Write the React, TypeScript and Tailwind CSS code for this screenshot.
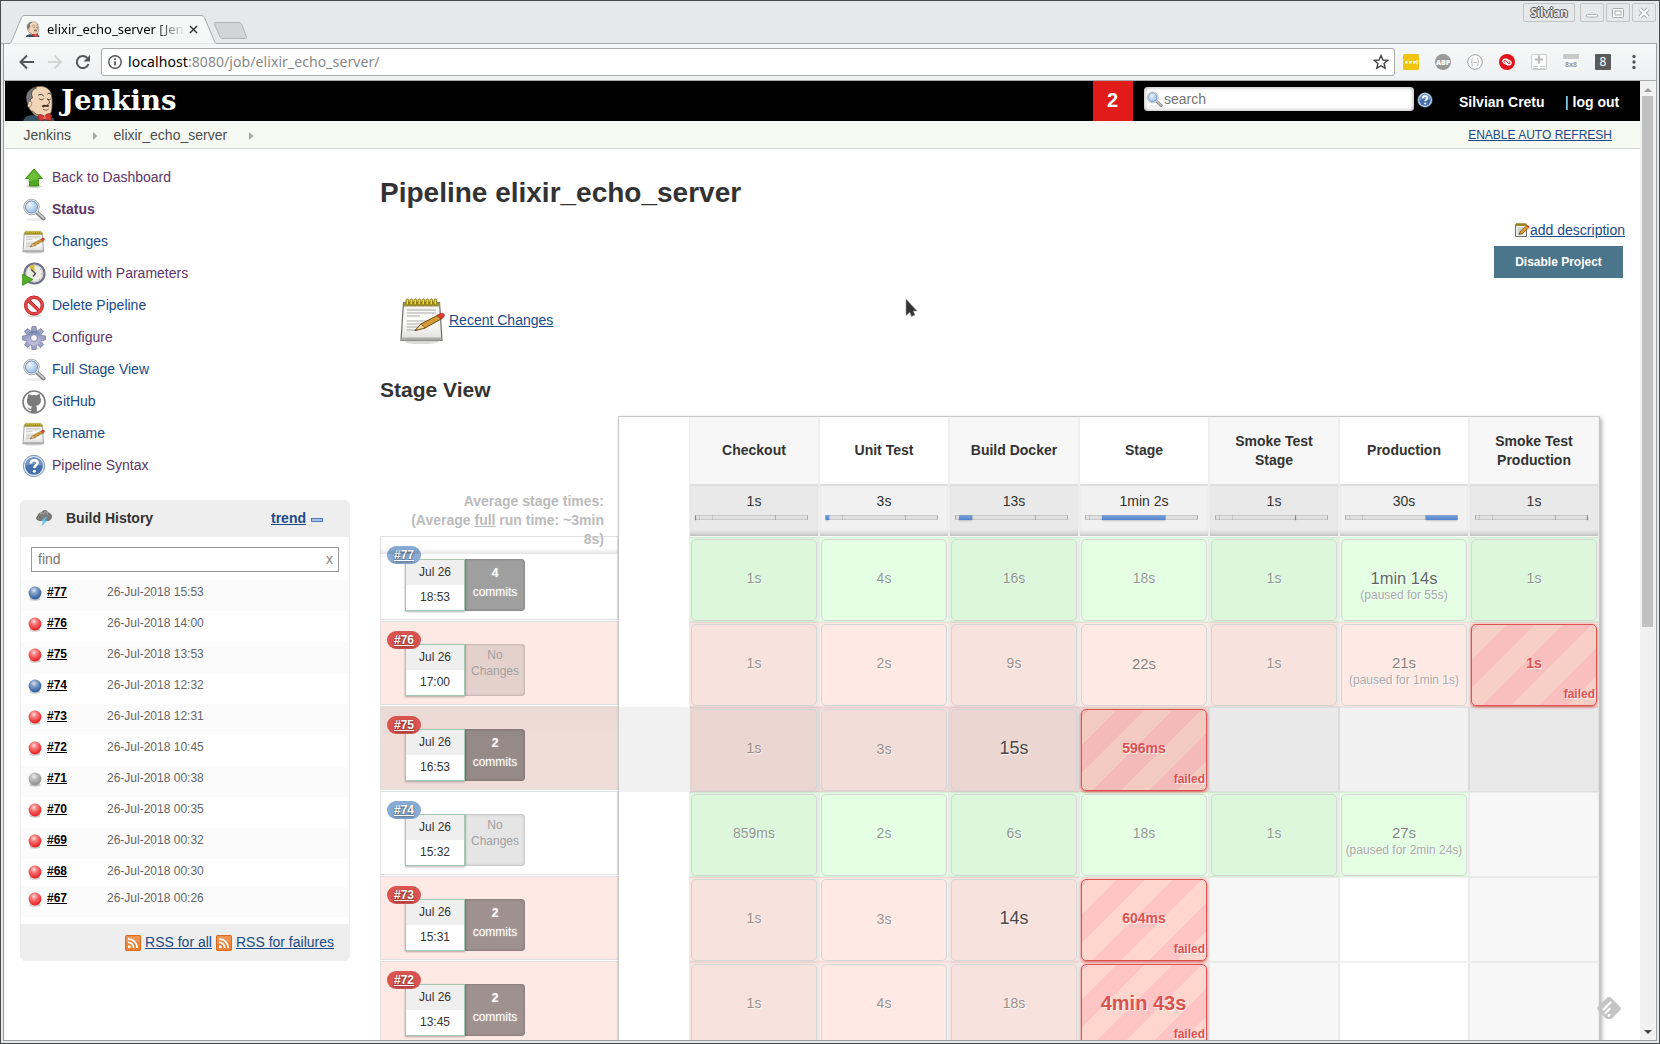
import React from "react";

type Kind = "ok" | "bad" | "failed" | "none";
type Cell = { kind: Kind; text?: string; size?: string; tone?: string; paused?: string };
type Run = {
  id: string;
  ok: boolean;
  time: string;
  commits: number;
  hovered?: boolean;
  cells: Cell[];
};

const s14 = "text-[14px]";

const c = (kind: Kind, text?: string, size = s14, tone = "text-[#333]/50", paused?: string): Cell => ({
  kind, text, size, tone, paused,
});

const runs: Run[] = [
  { id: "#77", ok: true, time: "18:53", commits: 4, cells: [
    c("ok", "1s"), c("ok", "4s"), c("ok", "16s"), c("ok", "18s"), c("ok", "1s"),
    c("ok", "1min 14s", "text-[16.5px]", "text-[#333]/75", "(paused for 55s)"), c("ok", "1s")] },
  { id: "#76", ok: false, time: "17:00", commits: 0, cells: [
    c("bad", "1s"), c("bad", "2s"), c("bad", "9s"), c("bad", "22s", "text-[15px] pt-px", "text-[#333]/60"), c("bad", "1s"),
    c("bad", "21s", "text-[15px]", "text-[#333]/60", "(paused for 1min 1s)"), c("failed", "1s")] },
  { id: "#75", ok: false, time: "16:53", commits: 2, hovered: true, cells: [
    c("bad", "1s"), c("bad", "3s", "text-[14.3px] pt-px"), c("bad", "15s", "text-[18px]", "text-[#333]/90"), c("failed", "596ms"),
    c("none"), c("none"), c("none")] },
  { id: "#74", ok: true, time: "15:32", commits: 0, cells: [
    c("ok", "859ms"), c("ok", "2s"), c("ok", "6s"), c("ok", "18s"), c("ok", "1s"),
    c("ok", "27s", "text-[15px]", "text-[#333]/60", "(paused for 2min 24s)"), c("none")] },
  { id: "#73", ok: false, time: "15:31", commits: 2, cells: [
    c("bad", "1s"), c("bad", "3s", "text-[14.3px] pt-px"), c("bad", "14s", "text-[18px]", "text-[#333]/90"), c("failed", "604ms"),
    c("none"), c("none"), c("none")] },
  { id: "#72", ok: false, time: "13:45", commits: 2, cells: [
    c("bad", "1s"), c("bad", "4s"), c("bad", "18s"), c("failed", "4min 43s", "text-[20px] mr-px"),
    c("none"), c("none"), c("none")] },
];

const stages = [
  { name: "Checkout", avg: "1s", from: 0, to: 1 },
  { name: "Unit Test", avg: "3s", from: 1, to: 4 },
  { name: "Build Docker", avg: "13s", from: 4, to: 17 },
  { name: "Stage", avg: "1min 2s", from: 17, to: 80 },
  { name: "Smoke Test Stage", avg: "1s", from: 80, to: 81 },
  { name: "Production", avg: "30s", from: 81, to: 112 },
  { name: "Smoke Test Production", avg: "1s", from: 112, to: 113 },
];

const history: [string, string, "blue" | "red" | "grey"][] = [
  ["#77", "26-Jul-2018 15:53", "blue"],
  ["#76", "26-Jul-2018 14:00", "red"],
  ["#75", "26-Jul-2018 13:53", "red"],
  ["#74", "26-Jul-2018 12:32", "blue"],
  ["#73", "26-Jul-2018 12:31", "red"],
  ["#72", "26-Jul-2018 10:45", "red"],
  ["#71", "26-Jul-2018 00:38", "grey"],
  ["#70", "26-Jul-2018 00:35", "red"],
  ["#69", "26-Jul-2018 00:32", "red"],
  ["#68", "26-Jul-2018 00:30", "red"],
  ["#67", "26-Jul-2018 00:26", "red"],
];

/* ---------- icons ---------- */

function Butler({ className }: { className: string }) {
  return (
    <svg viewBox="0 0 32 36" className={className}>
      <path d="M0 36c0-3 3-5 8-6l12 1c6 0 11 1 11 5z" fill="#335061" />
      <path d="M5 20C3 14 5 6 10 3c6-3 14-2 17 4 2 4 2 14 1 19-1 4-5 6-9 6-6 0-9-2-11-6-2-1-3-4-3-6z" fill="#f0d6b7" stroke="#5b5048" strokeWidth=".8" />
      <path d="M4 19C1 12 3 6 9 3c2-1 3-1 4 0-3 1-5 3-5 6l1 4-2 1-1 5z" fill="#7c7a7c" stroke="#222" strokeWidth=".6" />
      <path d="M5 17c2-2 4 0 3 3s-3 3-4 1z" fill="#f0d6b7" stroke="#6b5a4a" strokeWidth=".6" />
      <path d="M15 10c2-1 4-1 5 1M24 9c1-1 2-1 3 0M16 14c1 1 3 1 4 0M24 14c1 1 2 1 3 0M24 14c2 2 3 4 1 5M9 26c2 3 5 4 9 5" fill="none" stroke="#3b2b20" strokeWidth=".9" strokeLinecap="round" />
      <path d="M18 21c2-2 4-1 5-1 1-1 2 0 3 1-2 2-4 0-5 1s-2 0-3-1z" fill="#4a382b" />
      <path d="M20 24.500c2 1 4 1 5-.5" fill="none" stroke="#7a4a35" strokeWidth=".9" strokeLinecap="round" />
      <path d="M19 29l3 6h5l1-5-4 1z" fill="#fff" />
      <path d="M15 30c2-1 4 0 6 1 2-2 4-3 6-2 1 3 1 5 0 7-2 0-4-1-6-2-2 2-4 2-5 2-1-2-2-4-1-6z" fill="#d33833" stroke="#7a1513" strokeWidth=".6" />
      <circle cx="21" cy="32.500" r="1.500" fill="#ef6b60" />
    </svg>
  );
}

function Magnifier({ className }: { className: string }) {
  return (
    <svg viewBox="0 0 24 24" className={className}>
      <defs>
        <radialGradient id="lens" cx=".35" cy=".3" r=".8">
          <stop offset="0" stopColor="#eef5fd" />
          <stop offset="1" stopColor="#93b9e6" />
        </radialGradient>
      </defs>
      <ellipse cx="13" cy="21.500" rx="9" ry="1.500" fill="#000" opacity=".08" />
      <path d="M14.500 14l7 6.500" stroke="#7b7d7a" strokeWidth="4" strokeLinecap="round" />
      <path d="M15 14l6.500 6" stroke="#c4c6c2" strokeWidth="2" strokeLinecap="round" />
      <circle cx="9.500" cy="9" r="7.800" fill="#e7e8e6" stroke="#a5a7a4" strokeWidth=".9" />
      <circle cx="9.500" cy="9" r="6" fill="url(#lens)" stroke="#6f93c1" strokeWidth="1" />
    </svg>
  );
}

function Notepad({ className }: { className: string }) {
  return (
    <svg viewBox="0 0 48 48" className={className}>
      <defs>
        <linearGradient id="paper" x1="0" y1="0" x2="0" y2="1">
          <stop offset="0" stopColor="#f2f2f1" />
          <stop offset=".5" stopColor="#fdfdfd" />
          <stop offset="1" stopColor="#dededd" />
        </linearGradient>
      </defs>
      <ellipse cx="23" cy="45" rx="17" ry="2" fill="#000" opacity=".15" />
      <path d="M4.500 5.500h36l2.500 38H2z" fill="url(#paper)" stroke="#6c6d6a" strokeWidth="1.200" />
      <path d="M2.800 40.500h39.600v3H2.400z" fill="#a9aba8" />
      <path d="M5 5.500h35.500l.4 4H4.800z" fill="#a39443" />
      {[7, 11, 15, 19, 23, 27, 31, 35].map((x) => (
        <rect key={x} x={x} y="2" width="2.600" height="6" rx="1.300" fill="#f0d93a" stroke="#7d6c0c" strokeWidth=".9" />
      ))}
      <path d="M8 13h29M8 16h29M8 19h13M8 24h22M8 27h18M8 30h15M8 33h10" stroke="#a8aaa7" strokeWidth="1" />
      <path d="M16 33.500l6-6.500 17-9 4 3.500-17 9.500z" fill="#d59a35" stroke="#6e4a0d" strokeWidth="1" />
      <path d="M16 33.500l6-6.500 4 4z" fill="#f0d5a0" stroke="#6e4a0d" strokeWidth=".8" />
      <path d="M38 18.500l4 3.500c5-2 4-7-.5-5.500z" fill="#e23a2c" stroke="#8c1d14" strokeWidth=".6" />
    </svg>
  );
}

function EditNote() {
  return (
    <svg viewBox="0 0 16 16" className="h-4 w-4">
      <path d="M1.500 2.500h11v12h-11z" fill="#f4f4f3" stroke="#6c6d6a" />
      <path d="M2 1.500h10.500v2.500H2z" fill="#b39b2c" />
      <path d="M3 1v2.500M5 1v2.500M7 1v2.500M9 1v2.500M11 1v2.500" stroke="#6d5d10" strokeWidth=".8" />
      <path d="M3.500 6h7M3.500 8h4M3.500 10h2.500M3.500 12h6" stroke="#a5a7a4" strokeWidth=".8" />
      <path d="M5 12.500l1.500-3.500 6.500-5.500 2 2-6.500 6z" fill="#dfa13a" stroke="#6e4a0d" strokeWidth=".8" />
      <path d="M12.500 4l2 2 1-1.200-1.700-1.800z" fill="#e23a2c" />
    </svg>
  );
}

function Help({ className }: { className: string }) {
  return (
    <svg viewBox="0 0 24 24" className={className}>
      <circle cx="12" cy="12" r="10.700" fill="#dbe4f0" stroke="#7d97bd" strokeWidth="1" />
      <circle cx="12" cy="12" r="8.800" fill="#4470ad" />
      <path d="M3.200 12a8.800 8.800 0 0117.600 0c-5-2-12.600-2-17.600 0z" fill="#7396c8" />
      <path d="M8.800 9.500c0-4.500 6.700-4 6.700-.5 0 2.300-3.200 2.300-3.200 5" fill="none" stroke="#fff" strokeWidth="2.600" />
      <circle cx="12.300" cy="17.300" r="1.500" fill="#fff" />
    </svg>
  );
}

const iconCls = "h-6 w-6";

function UpArrow() {
  return (
    <svg viewBox="0 0 24 24" className={iconCls}>
      <ellipse cx="12" cy="20.500" rx="8" ry="1.500" fill="#000" opacity=".18" />
      <path d="M12 3l8.500 9.500h-4V20h-9v-7.500h-4z" fill="#4fa81f" stroke="#3a8a10" strokeWidth=".9" />
      <path d="M12 4.500l6.500 7.300h-3V14c-3-1-6 0-9 2v-4.200h-1z" fill="#7ed04b" opacity=".6" />
    </svg>
  );
}

function ClockPlay() {
  return (
    <svg viewBox="0 0 24 24" className={iconCls}>
      <circle cx="12.500" cy="11.500" r="10" fill="#ecebe6" stroke="#6f7088" strokeWidth="2.200" />
      <circle cx="12.500" cy="11.500" r="8.400" fill="none" stroke="#c9c9cf" strokeWidth=".8" />
      <path d="M12.500 11.500L7 4.500c2-1.500 4-1.700 5.500-1.700z" fill="#d8bb3a" />
      <path d="M9 7.500l4.500 4L11 14.500" fill="none" stroke="#444" strokeWidth="1.200" />
      <path d="M18 8l1-1M19 12h1.500M17 17l1 1" stroke="#aaa" />
      <path d="M.5 12l10.500 5.500L.5 23.500z" fill="#4fae25" stroke="#3b8c16" strokeWidth=".7" />
    </svg>
  );
}

function Forbidden() {
  return (
    <svg viewBox="0 0 24 24" className={iconCls}>
      <ellipse cx="12" cy="22" rx="8" ry="1.200" fill="#000" opacity=".15" />
      <circle cx="12" cy="11.500" r="8.300" fill="#fff" stroke="#b51515" strokeWidth="3.400" />
      <path d="M6 6l12 11.500" stroke="#b51515" strokeWidth="3.200" />
      <circle cx="12" cy="11.500" r="8.300" fill="none" stroke="#e04646" strokeWidth="2.400" />
      <path d="M6 6l12 11.500" stroke="#e04646" strokeWidth="2.200" />
    </svg>
  );
}

function Gear() {
  return (
    <svg viewBox="0 0 24 24" className={iconCls}>
      <defs>
        <linearGradient id="gear" x1="0" y1="0" x2="0" y2="1">
          <stop offset="0" stopColor="#6580a8" />
          <stop offset=".5" stopColor="#a9a9cf" />
          <stop offset="1" stopColor="#c3c3dd" />
        </linearGradient>
      </defs>
      <ellipse cx="12" cy="22.500" rx="8" ry="1.200" fill="#000" opacity=".12" />
      <g fill="#9da3c6" stroke="#75759c" strokeWidth=".7" strokeLinejoin="round">
        {[0, 45, 90, 135, 180, 225, 270, 315].map((a) => (
          <path key={a} d="M9.300 6L10 .5h4l.7 5.500z" transform={`rotate(${a} 12 12)`} />
        ))}
      </g>
      <circle cx="12" cy="12" r="7.600" fill="url(#gear)" />
      <circle cx="12" cy="12" r="3.300" fill="#fff" stroke="#75759c" strokeWidth=".7" />
    </svg>
  );
}

function OctocatRing() {
  return (
    <svg viewBox="0 0 24 24" className={iconCls}>
      <circle cx="12" cy="12" r="11" fill="#fff" stroke="#7b7b7b" strokeWidth="1.600" />
      <path d="M6 6.500c0-1.500.3-2.300.8-2.300 1.300 0 2.200.8 3 1.200 1.500-.4 3-.4 4.500 0 .9-.5 1.900-1.300 3.200-1.300.5.5.8 1.800.5 3 1.700 2.200 1.700 8.200-4 8.700.6.600.8 1.300.8 2.200v4.500H9.200v-2.500C6.500 20.500 6.300 18 5 17.500c1.800-.5 2.700 1.900 4.200 1.300 0-1 .2-1.700.7-2.200C4.500 16 4 9.500 6 7z" fill="#7b7b7b" />
    </svg>
  );
}

function StormCloud() {
  return (
    <svg viewBox="0 0 16 16" className="h-4 w-4">
      <path d="M3.500 10.500C.5 10.500-.5 7 2 6c0-2.500 2-3.500 3.500-3C7-.5 11.500 0 12 3c2.500 0 4.500 2.500 3 5.500-.7 1.500-2 2-3.500 2z" fill="#7b7c79" stroke="#50514f" strokeWidth=".7" />
      <path d="M4 4c2-2 4-.5 4 1M8 2.500c2-1.500 4 0 3.500 2" stroke="#b9bab7" fill="none" />
      <path d="M9.500 7L5.500 11h2L6 15.500 11 10.500H8.500L11 7z" fill="#6fd0f5" stroke="#3aa4d8" strokeWidth=".4" />
    </svg>
  );
}

function Rss() {
  return (
    <svg viewBox="0 0 16 16" className="mt-px h-4 w-4">
      <rect width="16" height="16" rx="2" fill="#ec8232" />
      <rect x=".5" y=".5" width="15" height="15" rx="1.500" fill="none" stroke="#dd6c22" />
      <path d="M1 1h14v7C10 5 5 6 1 9z" fill="#fff" opacity=".15" />
      <circle cx="4.300" cy="11.800" r="1.500" fill="#fff" />
      <path d="M3 7.300a5.700 5.700 0 015.700 5.700M3 3.800a9.200 9.200 0 019.200 9.200" fill="none" stroke="#fff" strokeWidth="1.800" />
    </svg>
  );
}

function Ball({ color }: { color: "blue" | "red" | "grey" }) {
  const fill = { blue: "#3465a4", red: "#ef2929", grey: "#959595" }[color];
  return (
    <svg viewBox="0 0 16 16" className="h-4 w-4">
      <defs>
        <radialGradient id={"ball-" + color} cx=".42" cy=".3" r=".62">
          <stop offset="0" stopColor="#fff" stopOpacity=".85" />
          <stop offset=".4" stopColor="#fff" stopOpacity=".38" />
          <stop offset="1" stopColor="#fff" stopOpacity="0" />
        </radialGradient>
      </defs>
      <ellipse cx="8" cy="14" rx="5.500" ry="1.700" fill="#000" opacity=".2" />
      <circle cx="8" cy="8" r="6.400" fill={fill} />
      <circle cx="8" cy="8" r="6.400" fill={"url(#ball-" + color + ")"} />
    </svg>
  );
}

/* ---------- browser chrome ---------- */

function TabStrip() {
  return (
    <div className="relative flex h-[42px] shrink-0 items-end font-['Noto_Sans']">
      <svg viewBox="0 0 260 30" className="absolute bottom-[-1px] left-[-1px] h-[30px] w-[260px]">
        <path d="M0 29.500h9c1 0 2-1 2.500-2l10-24C22 2.500 23 1.500 24 1.500h178c1 0 2 1 2.500 2l10 24c.5 1 1.500 2 2.500 2h43" fill="#f6f7f7" stroke="#a6a9ac" />
        <path d="M10 29.500H216v1H10z" fill="#f6f7f7" />
        <path d="M215 8.500h24c1 0 2 .5 2.500 1.500l5 12.500c.5 1.500 0 2-1 2h-23c-1 0-2-.5-2.500-1.500l-5.500-13c-.4-1 0-1.500.5-1.500z" fill="#d2d4d6" stroke="#b0b2b5" />
      </svg>
      <div className="relative flex h-7 items-center pl-[25px]">
        <Butler className="h-4 w-[14px] shrink-0" />
        <div className="ml-[7px] w-[142px] shrink-0 whitespace-nowrap bg-linear-to-r from-black from-75% to-transparent to-98% bg-clip-text text-[13px] leading-5 text-transparent">
          elixir_echo_server [Jen
        </div>
        <svg viewBox="0 0 10 10" className="h-[9px] w-[9px] shrink-0">
          <path d="M1 1l8 8M9 1L1 9" stroke="#333" strokeWidth="1.600" />
        </svg>
      </div>
      <div className="absolute top-[2px] right-[3px] flex text-[#888]">
        <div className="mr-[5px] flex h-[19px] w-[52px] items-center justify-center rounded-[2px] border border-[#c2c4c4] text-[12px] leading-none font-bold tracking-[-0.300px] text-[#e6e8e9] [text-shadow:0_1px_0_#555,1px_0_0_#555,-1px_0_0_#555,0_-1px_0_#555]">
          Silvian
        </div>
        {[0, 1, 2].map((i) => (
          <div key={i} className="mr-[2px] flex h-[19px] w-6 items-center justify-center rounded-[2px] border border-[#c2c4c4] last:mr-0">
            <svg viewBox="0 0 14 14" className="h-[14px] w-[14px]" fill="none" stroke="#a9abab">
              {i === 0 && <rect x="1.500" y="8.500" width="11" height="2.500" rx="1" fill="#fff" />}
              {i === 1 && <><rect x="1.500" y="2.500" width="11" height="9" rx="1" fill="#fff" /><rect x="4" y="5" width="6" height="4" /></>}
              {i === 2 && <><path d="M3 3l8 8M11 3l-8 8" strokeWidth="4" /><path d="M3 3l8 8M11 3l-8 8" stroke="#fff" strokeWidth="2" /></>}
            </svg>
          </div>
        ))}
      </div>
    </div>
  );
}

function Toolbar() {
  return (
    <div className="flex h-[38px] shrink-0 items-center border-y border-t-[#a6a9ac] border-b-[#a9abad] bg-linear-to-b from-[#f6f7f7] to-[#eff0f1] pr-[20px] pl-[15px] font-['Noto_Sans']">
      <svg viewBox="0 0 72 16" className="h-4 w-[72px] shrink-0" fill="none" strokeWidth="2">
        <path d="M15 8H2M8 1.500L1.500 8 8 14.500" stroke="#555" />
        <path d="M29 8h13M35.500 1.500L42 8l-6.500 6.500" stroke="#d3d4d4" />
        <path d="M69.500 10a6 6 0 11-1.300-6" stroke="#555" />
        <path d="M71 1v6.500h-6.500z" fill="#555" />
      </svg>
      <div className="ml-[10px] flex h-7 w-[1294px] shrink-0 items-center rounded-[3px] border border-[#a9abad] bg-white pr-[5px] pl-[6px]">
        <svg viewBox="0 0 14 14" className="h-[14px] w-[14px]" fill="none" stroke="#555" strokeWidth="1.400">
          <circle cx="7" cy="7" r="6.200" />
          <path d="M7 6.200v4.300M7 3.300v1.600" strokeWidth="1.700" />
        </svg>
        <div className="ml-[6px] flex-1 text-[14px] leading-5 tracking-[0.080px] text-[#888]">
          <span className="text-black">localhost</span>:8080/job/elixir_echo_server/
        </div>
        <svg viewBox="0 0 16 16" className="h-4 w-4" fill="none" stroke="#444" strokeWidth="1.400">
          <path d="M8 1.500l2 4.500 4.700.4-3.600 3.100 1.100 4.700L8 11.700l-4.200 2.500 1.100-4.700L1.300 6.400 6 6z" />
        </svg>
      </div>
      <div className="ml-[8px] flex flex-1 items-center gap-4">
        <svg viewBox="0 0 16 16" className="h-4 w-4"><rect width="16" height="16" rx="1.500" fill="#f1c40f" /><path d="M2 7h2.500v2.500H2zM6 7h2.500v2.500H6zM10 7h2.500v2.500H10zM13.500 6h1v4.500h-1z" fill="#fff" /></svg>
        <div className="flex h-4 w-4 items-center justify-center rounded-full bg-[#999] font-['Open_Sans'] text-[7px] leading-none font-extrabold text-white">ABP</div>
        <svg viewBox="0 0 16 16" className="h-4 w-4" fill="none" stroke="#a3a3a3"><circle cx="8" cy="8" r="7.300" fill="#fafafa" /><path d="M6 4.500c-1.500 0-1 1-1 2s0 1.500-1 1.500c1 0 1 .5 1 1.500s-.5 2 1 2M10 4.500c1.500 0 1 1 1 2s0 1.500 1 1.500c-1 0-1 .5-1 1.500s.5 2-1 2M6.500 8.500h3" strokeWidth=".8" /></svg>
        <svg viewBox="0 0 16 16" className="h-4 w-4"><circle cx="8" cy="8" r="8" fill="#e1121c" /><g fill="none" stroke="#fff" strokeWidth="1.400" strokeLinecap="round"><path d="M8.600 11L4.600 8.800C2.600 7 4.800 4.200 7 5.600l3 2.900" /><path d="M7.400 5L11.400 7.200c2 1.800-.2 4.600-2.400 3.200L6 7.500" /></g></svg>
        <svg viewBox="0 0 16 16" className="h-4 w-4" fill="none" stroke="#c9c9c9"><rect x=".5" y=".5" width="15" height="15" rx="1" fill="#fafafa" /><path d="M8 1.500v8M4 5.500h8" strokeWidth="2" stroke="#bbb" /><path d="M2 12.500h5M9 12.500h5M2 14.500h5M9 14.500h5" /></svg>
        <div className="flex h-4 w-4 flex-col items-center bg-[#fafafa] text-[7px] leading-[11px] font-bold text-[#999]"><div className="h-[5px] w-4 shrink-0 rounded-t-[1px] bg-[#c9c9c9]" />8x8</div>
        <div className="flex h-4 w-4 items-center justify-center rounded-[1px] bg-[#5b5b5b] text-[12px] leading-none text-white">8</div>
      </div>
      <svg viewBox="0 0 4 16" className="h-4 w-1" fill="#555"><circle cx="2" cy="2.500" r="1.700" /><circle cx="2" cy="8" r="1.700" /><circle cx="2" cy="13.500" r="1.700" /></svg>
    </div>
  );
}

/* ---------- page ---------- */

function Header() {
  return (
    <div className="flex h-10 shrink-0 items-center bg-black text-white">
      <Butler className="mt-[4px] ml-[18px] h-[36px] w-[33px]" />
      <div className="ml-[5px] font-['DejaVu_Serif'] text-[27.500px] leading-none font-bold">Jenkins</div>
      <div className="ml-auto flex h-10 w-10 items-center justify-center bg-[#e11a1a] pr-px pb-[2px] text-[20px] font-bold">2</div>
      <div className="mb-[4px] ml-[11px] flex h-6 w-[270px] items-center rounded-[4px] bg-white pl-[2px] text-[14px] text-[#757575] shadow-[inset_0_0_4px_#999]">
        <Magnifier className="mr-[1px] h-[17px] w-[17px]" />
        search
      </div>
      <Help className="mb-[2px] ml-[3px] h-4 w-4" />
      <div className="mt-[3px] ml-[26px] w-[106px] text-[14px] font-bold">Silvian Cretu</div>
      <div className="mt-[3px] w-[75px] text-[14px] font-bold"><span className="font-normal">|</span> log out</div>
    </div>
  );
}

function Crumbs() {
  const tri = <svg viewBox="0 0 5 8" className="h-2 w-[5px]"><path d="M0 0l4.500 4L0 8z" fill="#a9aca6" /></svg>;
  return (
    <div className="flex h-[28px] shrink-0 items-center border-b border-[#d3d7cf] bg-[#f6faf2] pt-[2px] pl-[18.500px] text-[14px] text-[#4d4d4d]">
      <span className="w-[69px]">Jenkins</span>
      {tri}
      <span className="ml-[16px] w-[135.500px]">elixir_echo_server</span>
      {tri}
      <span className="mr-[28px] mb-[2px] ml-auto text-[12px] text-[#204a87] underline">ENABLE AUTO REFRESH</span>
    </div>
  );
}

function Sidebar() {
  const tasks: [React.ReactNode, string, string][] = [
    [<UpArrow />, "Back to Dashboard", "text-[#5c3566]"],
    [<Magnifier className={iconCls} />, "Status", "text-[#5c3566] font-bold"],
    [<Notepad className={iconCls} />, "Changes", "text-[#204a87]"],
    [<ClockPlay />, "Build with Parameters", "text-[#5c3566]"],
    [<Forbidden />, "Delete Pipeline", "text-[#204a87]"],
    [<Gear />, "Configure", "text-[#5c3566]"],
    [<Magnifier className={iconCls} />, "Full Stage View", "text-[#204a87]"],
    [<OctocatRing />, "GitHub", "text-[#204a87]"],
    [<Notepad className={iconCls} />, "Rename", "text-[#204a87]"],
    [<Help className={iconCls} />, "Pipeline Syntax", "text-[#5c3566]"],
  ];
  return (
    <div className="w-[360px] shrink-0 pt-3 pl-[15px] text-[14px]">
      <div className="pl-[2px]">
        {tasks.map(([icon, label, cls]) => (
          <div key={label} className="flex h-8 items-center">
            <span className="mt-[2px] w-[30px]">{icon}</span>
            <span className={"pt-px " + cls}>{label}</span>
          </div>
        ))}
      </div>
      <div className="mt-[19px] w-[330px] overflow-hidden rounded-[5px] border border-[#eee]">
        <div className="flex h-[36px] items-center bg-[#eee] pb-[2px] pl-[15px]">
          <StormCloud />
          <span className="ml-[14px] flex-1 font-bold text-[#333]">Build History</span>
          <span className="font-bold text-[#204a87] underline">trend</span>
          <span className="mt-[3px] mr-[26px] ml-[5px] h-[4px] w-3 border border-[#4a78b5] bg-[#a9c4e6]" />
        </div>
        <div className="mx-[10px] mt-[10px] mb-2 flex h-[25px] items-center justify-between border border-[#999] pr-[5px] pl-[6px] text-[#777]">
          <span>find</span>
          <span className="text-[#888]">x</span>
        </div>
        {history.map(([id, date, color], i) => (
          <div key={id} className={"flex items-start pl-[6px] text-[12px] leading-[15px] " + (i === 9 ? "h-[27px]" : "h-[31px]") + (i % 2 === 0 ? " bg-[#fbfbfb]" : "")}>
            <span className="mt-[5px]"><Ball color={color} /></span>
            <span className="mt-[5px] ml-1 w-[60px] font-bold text-black underline">{id}</span>
            <span className="mt-[5px] text-[#666]">{date}</span>
          </div>
        ))}
        <div className="mt-[7px] flex h-[36px] items-center justify-end bg-[#eee] pr-[15px] text-[#204a87]">
          <Rss /><span className="mr-1 ml-1 underline">RSS for all</span>
          <Rss /><span className="ml-1 underline">RSS for failures</span>
        </div>
      </div>
    </div>
  );
}

function RunCard({ run }: { run: Run }) {
  const bg = run.ok ? "bg-white" : run.hovered ? "bg-linear-to-b from-[#ebd9d4] to-[#f0ddd8] to-40%" : "bg-[#ffe9e4]";
  return (
    <div className={"mb-px h-[84px] border border-[#e0e0e0] pt-[22px] pl-[24px] " + bg}>
      <div className="relative flex text-center text-[12px]">
        <div className="relative h-[52px] w-[60px] border border-[#a3c9b5] bg-white text-[#333] shadow-[0_1px_2px_rgba(0,0,0,.3)]">
          <div className="h-[25px] bg-[#efefef] leading-[25px]">Jul 26</div>
          <div className="leading-[25px]">{run.time}</div>
        </div>
        {run.commits > 0 ? (
          <div className="h-[52px] w-[60px] rounded-r-[4px] bg-black/[.375] pt-[5px] leading-[19px] text-white shadow-[inset_0_0_3px_rgba(0,0,0,.3)] [text-shadow:0_0_2px_rgba(255,255,255,.4)]">
            <div className="font-bold">{run.commits}</div>
            <div>commits</div>
          </div>
        ) : (
          <div className="h-[52px] w-[60px] rounded-r-[4px] bg-black/[.1] pt-[3px] leading-4 text-[#a0a0a0] shadow-[inset_0_0_3px_rgba(0,0,0,.3)]">No Changes</div>
        )}
        <div className={"absolute -top-[13px] -left-[18px] h-[18px] w-[34px] rounded-full text-[12px] leading-[18px] font-bold text-white underline [text-shadow:0_1px_2px_rgba(0,0,0,.6)] " + (run.ok ? "bg-[#87abd3]" : "bg-[#d9534f]")}>{run.id}</div>
      </div>
    </div>
  );
}

const plain: Record<Kind, { odd: string; even: string; oddHover: string; evenHover: string }> = {
  ok: { odd: "bg-[#ddf7dd]", even: "bg-[#e4ffe4]", oddHover: "", evenHover: "" },
  bad: { odd: "bg-[#f7e2dd]", even: "bg-[#ffe9e4]", oddHover: "bg-[#ebd6d1]", evenHover: "bg-[#f3ddd8]" },
  none: { odd: "bg-[#f7f7f7]", even: "bg-white", oddHover: "bg-[#e9e9e9]", evenHover: "bg-[#f1f1f1]" },
  failed: {
    odd: "bg-[repeating-linear-gradient(-45deg,#f8cfc7_0_20px,#f8bfbe_20px_40px)]",
    even: "bg-[repeating-linear-gradient(-45deg,#ffd6cd_0_20px,#ffc4c4_20px_40px)]",
    oddHover: "",
    evenHover: "bg-[repeating-linear-gradient(-45deg,#f4cbc1_0_20px,#f3bab9_20px_40px)]",
  },
};

function StageCell({ cell, col, hovered }: { cell: Cell; col: number; hovered?: boolean }) {
  const key = ((col % 2 === 0 ? "odd" : "even") + (hovered ? "Hover" : "")) as "odd";
  const back = cell.kind === "failed" ? plain.bad[key] : plain[cell.kind][key];
  const failed = cell.kind === "failed";
  return (
    <div className={"h-[85px] shrink-0 border-y p-px pb-0 " + (col === 6 ? "w-[129px] border-r " : "w-[130px] border-r-2 ") + back + (hovered ? " border-y-black/[.05] border-r-[#dcdcdc]" : " border-y-black/[.05] border-r-[#ebebeb]")}>
      {cell.kind !== "none" && (
        <div className={"relative flex h-[82px] w-[126px] flex-col items-center justify-center rounded-[5px] border pb-1 text-center [text-shadow:1px_1px_1px_rgba(255,255,255,.8)] " + plain[cell.kind][key] + (failed ? " border-[#d9534f] font-bold text-[#d9534f] shadow-[0_1px_3px_#d9534f]" : " border-[#d3d6d3] " + cell.tone)}>
          <div className={"leading-[18px] whitespace-nowrap " + cell.size + (cell.paused ? " mt-[16px]" : "")}>{cell.text}</div>
          {cell.paused && <div className="text-[12px] leading-4 whitespace-nowrap text-[#aaa]">{cell.paused}</div>}
          {failed && <div className="absolute right-[1px] bottom-[3px] text-[12px] leading-4">failed</div>}
        </div>
      )}
    </div>
  );
}

function StageView() {
  return (
    <div className="relative flex">
      <div className="w-[238px] shrink-0 pt-[120px]">
        {runs.map((r) => <RunCard key={r.id} run={r} />)}
      </div>
      <div className="absolute top-0 left-0 h-[138px] w-[238px] bg-linear-to-t from-black/10 to-transparent to-[6px] pt-[76px] pr-[14px] text-right text-[14px] leading-[19px] font-bold text-[#bbb]">
        Average stage times:<br />(Average <u>full</u> run time: ~3min<br />8s)
      </div>
      <div className="w-[982px] shrink-0 border border-[#c8c8c8] bg-white shadow-[2px_2px_4px_rgba(0,0,0,.3)]">
        <div className="flex h-[120px]">
          <div className="w-[71px] shrink-0 border-r border-[#eee]" />
          {stages.map((s, i) => (
            <div key={s.name} className={"shrink-0 border-[#eee] text-center " + (i === 6 ? "w-[129px] border-r " : "w-[130px] border-r-2 ") + (i % 2 === 0 ? "bg-[#f7f7f7]" : "bg-white")}>
              <div className="flex h-[67px] items-center justify-center px-3 text-[14px] leading-[19px] font-bold text-[#333]">{s.name}</div>
              <div className={"h-[52px] border-t-2 border-[#ddd] pt-[6px] shadow-[inset_0_-5px_5px_-3px_rgba(0,0,0,.22)] " + (i % 2 === 0 ? "bg-[#e9e9e9]" : "bg-[#f1f1f1]")}>
                <div className="text-[14px] leading-[19px] text-[#333]">{s.avg}</div>
                <div className="relative mt-[4px] ml-[5px] h-[5px] w-[113px] border border-[#c9c9c9] border-x-[#aaa] bg-[#e0e0e0]">
                  <div className="absolute -top-px left-[3px] h-[5px] w-px bg-black/10" />
                  <div className="absolute -top-px left-[16px] h-[5px] w-px bg-black/10" />
                  <div className="absolute -top-px left-[79px] h-[5px] w-px bg-black/20" />
                  <div className="absolute -top-px h-[5px] bg-linear-to-b from-[#7fa3d3] to-[#4f82d0] shadow-[0_1px_2px_rgba(0,0,0,.2)]" style={{ left: s.from - 1, width: s.to - s.from }} />
                </div>
              </div>
            </div>
          ))}
        </div>
        {runs.map((r) => (
          <div key={r.id} className="flex">
            <div className={"w-[71px] shrink-0 border-r border-[#eee] " + (r.hovered ? "bg-[#f1f1f1]" : "")} />
            {r.cells.map((cell, i) => <StageCell key={i} cell={cell} col={i} hovered={r.hovered} />)}
          </div>
        ))}
      </div>
    </div>
  );
}

function Main() {
  return (
    <div className="w-[1275px] shrink-0 pl-[15px]">
      <h1 className="pt-[26px] text-[28px] leading-[36px] font-bold text-[#333]">Pipeline elixir_echo_server</h1>
      <div className="mt-[9px] mr-[15px] flex flex-col items-end">
        <div className="flex h-[20px] items-center text-[14px] text-[#204a87]">
          <EditNote /><span className="underline">add description</span>
        </div>
        <div className="mt-[6px] mr-[2px] flex h-8 w-[129px] items-center justify-center bg-[#4b758b] text-[12px] font-bold text-white">Disable Project</div>
      </div>
      <div className="mt-[18px] flex h-12 items-center pl-[19px] text-[14px] text-[#204a87]">
        <Notepad className="mt-[1px] h-12 w-12" /><span className="ml-[2px] underline">Recent Changes</span>
      </div>
      <h2 className="mt-[33px] mb-[13px] text-[21px] leading-[26px] font-bold text-[#333]">Stage View</h2>
      <StageView />
    </div>
  );
}

export default function App() {
  return (
    <div className="relative flex h-[1044px] w-[1660px] flex-col overflow-hidden border border-[#47494b] bg-[#e6e8e9] font-['Liberation_Sans',sans-serif]">
      <TabStrip />
      <div className="flex min-h-0 flex-1 flex-col px-[2px] pb-[2px]">
        <div className="flex min-h-0 flex-1 flex-col border-x border-b border-[#9b9da0] bg-[#f4f4f4]">
          <Toolbar />
          <div className="flex min-h-0 flex-1 pr-[1px]">
            <div className="ml-[1px] flex w-[1635px] flex-col overflow-hidden bg-white">
              <Header />
              <Crumbs />
              <div className="flex min-h-0 flex-1 overflow-hidden">
                <Sidebar />
                <Main />
              </div>
            </div>
            <div className="flex flex-1 flex-col items-center bg-[#f1f1f1] py-[5px]">
              <svg viewBox="0 0 8 5" className="mt-[1px] h-[5px] w-2"><path d="M0 5l4-4 4 4z" fill="#999" /></svg>
              <div className="mt-[4px] h-[531px] w-[11px] bg-[#c1c1c1]" />
              <svg viewBox="0 0 8 5" className="mt-auto h-[5px] w-2"><path d="M0 0l4 4 4-4z" fill="#444" /></svg>
            </div>
          </div>
        </div>
      </div>
      <svg viewBox="0 0 14 22" className="absolute top-[296px] left-[903px] h-[22px] w-[14px]">
        <path d="M2 2v16.500l3.800-3.300 1.700 4.300 3.500-1.500-1.800-4H13z" fill="#333" stroke="#999" strokeWidth=".6" />
      </svg>
      <svg viewBox="0 0 24 22" className="absolute top-[996px] left-[1596px] h-[22px] w-6">
        <path d="M10 .8c1-1 3-1 4 0l9.200 9.300c.9.9.9 2 0 2.900L15.500 21c-.7.700-1 1-2 1h-3c-1 0-1.500-.3-2-1L.8 13c-.9-.9-.9-2 0-2.900z" fill="#c4c4c4" />
        <path d="M6.500 12.500l7-7M8.500 16l4-4M11.500 18.800l1-1" stroke="#fff" strokeWidth="2.200" strokeLinecap="round" />
      </svg>
    </div>
  );
}
